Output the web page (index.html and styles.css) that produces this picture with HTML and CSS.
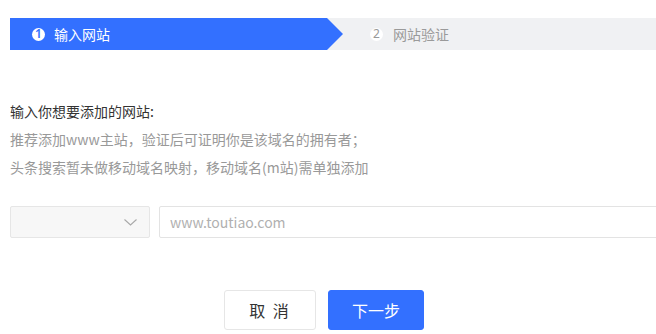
FILE: index.html
```html
<!DOCTYPE html>
<html lang="zh-CN">
<head>
<meta charset="utf-8">
<title>添加网站</title>
<link rel="stylesheet" href="styles.css">
</head>
<body>
<div class="page">
  <div class="steps">
    <div class="step step-active">
      <span class="step-num">1</span>
      <span class="step-label">输入网站</span>
    </div>
    <div class="step step-next">
      <span class="step-num">2</span>
      <span class="step-label">网站验证</span>
    </div>
  </div>

  <div class="intro">
    <p class="intro-title">输入你想要添加的网站:</p>
    <p class="intro-tip">推荐添加www主站，验证后可证明你是该域名的拥有者；</p>
    <p class="intro-tip">头条搜索暂未做移动域名映射，移动域名(m站)需单独添加</p>
  </div>

  <div class="field-row">
    <div class="select">
      <svg class="chevron" width="13" height="7" viewBox="0 0 13 7"><path d="M0.5 0.5 L6.5 6 L12.5 0.5" fill="none" stroke="#a8a8a8" stroke-width="1.1"/></svg>
    </div>
    <input class="url-input" type="text" placeholder="www.toutiao.com">
  </div>

  <div class="actions">
    <button class="btn btn-cancel">取 消</button>
    <button class="btn btn-primary">下一步</button>
  </div>
</div>
</body>
</html>
```
FILE: styles.css
```css
html, body {
  margin: 0;
  padding: 0;
  background: #ffffff;
  overflow: hidden;
}
body {
  font-family: "Microsoft YaHei", "Noto Sans CJK SC", "Noto Sans", sans-serif;
  width: 656px;
  height: 334px;
}
.page {
  padding: 18px 0 0 10px;
}
.steps {
  display: flex;
  height: 32px;
  background: #f0f1f3;
}
.step {
  display: flex;
  align-items: center;
  font-size: 14px;
}
.step-active {
  width: 333px;
  flex: none;
  box-sizing: border-box;
  padding-left: 22px;
  background: #3370ff;
  color: #ffffff;
  clip-path: polygon(0 0, calc(100% - 16px) 0, 100% 50%, calc(100% - 16px) 100%, 0 100%);
}
.step-next {
  padding-left: 27px;
  color: #9a9a9a;
}
.step-num {
  width: 13px;
  height: 13px;
  border-radius: 50%;
  background: #ffffff;
  display: flex;
  align-items: center;
  justify-content: center;
  font-size: 12px;
  line-height: 1;
  font-family: "Noto Sans", sans-serif;
  font-weight: 600;
  margin-right: 9px;
}
.step-active .step-num {
  color: #3370ff;
}
.step-next .step-num {
  color: #999999;
  font-weight: 400;
  margin-right: 10px;
}
.intro {
  margin-top: 47px;
}
.intro p {
  margin: 0;
  font-size: 14px;
  line-height: 28px;
}
.intro-title {
  color: #333333;
}
.intro-tip {
  color: #999999;
}
.field-row {
  display: flex;
  gap: 9px;
  margin-top: 25px;
  height: 32px;
}
.select {
  width: 140px;
  flex: none;
  box-sizing: border-box;
  border: 1px solid #e6e6e6;
  border-radius: 2px;
  background: #f7f7f7;
  display: flex;
  align-items: center;
  justify-content: flex-end;
  padding-right: 12px;
}
.chevron {
  display: block;
}
.url-input {
  width: 520px;
  flex: none;
  box-sizing: border-box;
  height: 32px;
  border: 1px solid #e3e3e3;
  border-radius: 2px;
  padding: 0 10px;
  font-family: "Microsoft YaHei", "Noto Sans CJK SC", "Noto Sans", sans-serif;
  font-size: 14px;
  color: #333333;
  outline: none;
}
.url-input::placeholder {
  color: #b0b0b0;
}
.actions {
  display: flex;
  gap: 12px;
  margin-top: 52px;
  margin-left: 214px;
}
.btn {
  height: 40px;
  border-radius: 3px;
  font-size: 16px;
  font-family: "Microsoft YaHei", "Noto Sans CJK SC", sans-serif;
  cursor: pointer;
  padding: 0;
}
.btn-cancel {
  width: 92px;
  background: #ffffff;
  border: 1px solid #e6e6e6;
  color: #333333;
  letter-spacing: 2px;
}
.btn-primary {
  width: 96px;
  background: #3370ff;
  border: 1px solid #3370ff;
  color: #ffffff;
}
```
